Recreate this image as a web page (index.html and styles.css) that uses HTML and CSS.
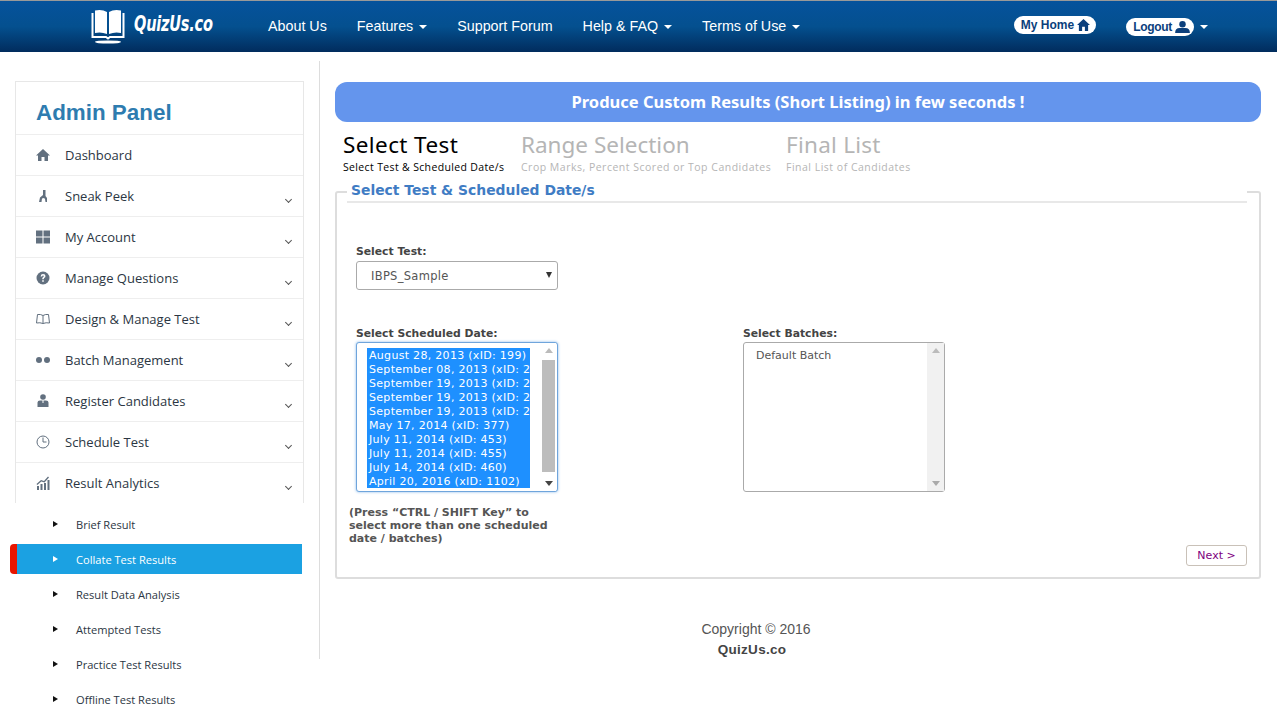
FILE: index.html
```html
<!DOCTYPE html>
<html lang="en">
<head>
    <meta charset="UTF-8">
    <meta name="viewport" content="width=device-width, initial-scale=1.0">
    <title>Collate Test Results</title>
    <link rel="stylesheet" href="styles.css">
</head>
<body>
    <header class="topbar">
        <a class="logo" href="#">
            <svg class="logo-icon" viewBox="0 0 34 35" fill="#fff">
                <path d="M4 1.500 Q11 0 16 3 V25 Q10 22.500 4 24 Z M30 1.500 Q23 0 18 3 V25 Q24 22.500 30 24 Z"/>
                <path d="M1.500 4 V28 H15 L17 29.500 L19 28 H32.500 V4" fill="none" stroke="#fff" stroke-width="2"/>
                <ellipse cx="17" cy="33" rx="13" ry="1.600"/>
            </svg>
            <span class="logo-text">QuizUs.co</span>
        </a>
        <nav class="nav">
            <a href="#">About Us</a>
            <a href="#">Features <i class="caret"></i></a>
            <a href="#">Support Forum</a>
            <a href="#">Help &amp; FAQ <i class="caret"></i></a>
            <a href="#">Terms of Use <i class="caret"></i></a>
        </nav>
        <div class="user-links">
            <a class="pill pill-home" href="#">My Home
                <svg viewBox="0 0 14 13" fill="#0b3f7c"><path d="M7 0 L14 6.500 L12 6.500 L12 13 L8.500 13 L8.500 8.500 L5.500 8.500 L5.500 13 L2 13 L2 6.500 L0 6.500 Z"/></svg>
            </a>
            <a class="pill pill-logout" href="#">Logout
                <svg viewBox="0 0 16 13" fill="#0b3f7c"><circle cx="8" cy="3.500" r="3.500"/><path d="M0 13 Q0 7.500 5 7.500 L11 7.500 Q16 7.500 16 13 Z"/></svg>
            </a>
            <i class="caret"></i>
        </div>
    </header>

    <div class="page">
        <aside class="sidebar">
            <div class="panel">
                <h1 class="panel-title">Admin Panel</h1>
                <a class="menu-row" href="#">
                    <svg class="menu-icon" viewBox="0 0 14 14"><path d="M7 1 L14 7.500 L12 7.500 L12 13 L8.500 13 L8.500 9 L5.500 9 L5.500 13 L2 13 L2 7.500 L0 7.500 Z"/></svg>
                    <span>Dashboard</span>
                </a>
                <a class="menu-row" href="#">
                    <svg class="menu-icon" viewBox="0 0 14 14"><path d="M7 1 L9.500 1 L9.500 7 L11 9 L11 13 L9.500 13 L9 10 L8 9 L6 9.500 L5.500 13 L3 13 L4 8.500 L7 6 Z"/></svg>
                    <span>Sneak Peek</span><i class="chev"></i>
                </a>
                <a class="menu-row" href="#">
                    <svg class="menu-icon" viewBox="0 0 14 14"><path d="M0 0.500 H6.500 V6.500 H0 Z M7.500 0.500 H14 V6.500 H7.500 Z M0 7.500 H6.500 V13.500 H0 Z M7.500 7.500 H14 V13.500 H7.500 Z"/></svg>
                    <span>My Account</span><i class="chev"></i>
                </a>
                <a class="menu-row" href="#">
                    <svg class="menu-icon" viewBox="0 0 14 14"><circle cx="7" cy="7" r="6.500"/><path d="M4.600 5.400 Q4.800 3 7 3 Q9.500 3 9.500 5 Q9.500 6.300 8.200 7 Q7.800 7.300 7.800 8.300 L6.200 8.300 Q6.100 6.700 7.200 6 Q7.900 5.600 7.800 5.100 Q7.700 4.500 7 4.500 Q6.300 4.500 6.200 5.400 Z M6.200 9.200 H7.800 V10.800 H6.200 Z" fill="#fff"/></svg>
                    <span>Manage Questions</span><i class="chev"></i>
                </a>
                <a class="menu-row" href="#">
                    <svg class="menu-icon icon-line" viewBox="0 0 14 14"><path d="M7 3.500 Q4.500 2 1.500 2.500 L0.500 11 Q4 10.300 7 11.500 Q10 10.300 13.500 11 L12.500 2.500 Q9.500 2 7 3.500 Z M7 3.500 V11.500"/></svg>
                    <span>Design &amp; Manage Test</span><i class="chev"></i>
                </a>
                <a class="menu-row" href="#">
                    <svg class="menu-icon" viewBox="0 0 14 14"><circle cx="3" cy="7" r="3"/><circle cx="11" cy="7" r="3"/></svg>
                    <span>Batch Management</span><i class="chev"></i>
                </a>
                <a class="menu-row" href="#">
                    <svg class="menu-icon" viewBox="0 0 14 14"><circle cx="7" cy="3" r="2.800"/><path d="M1.500 13 V8.500 Q1.500 6.500 4 6.500 L6.500 6.500 L6.500 9 L7.500 9 L7.500 6.500 L10 6.500 Q12.500 6.500 12.500 8.500 V13 Z"/></svg>
                    <span>Register Candidates</span><i class="chev"></i>
                </a>
                <a class="menu-row" href="#">
                    <svg class="menu-icon icon-line" viewBox="0 0 14 14"><circle cx="7" cy="7" r="6"/><path d="M7 2.500 V7 H10.500"/></svg>
                    <span>Schedule Test</span><i class="chev"></i>
                </a>
                <a class="menu-row" href="#">
                    <svg class="menu-icon" viewBox="0 0 14 14"><path d="M1 10 H3 V14 H1 Z M4.500 8 H6.500 V14 H4.500 Z M8 7 H10 V14 H8 Z M11.500 4 H13.500 V14 H11.500 Z M0.500 8 L5 4 L8 5 L12 0.500 L13 1.500 L8.500 6.500 L5.300 5.500 L1.300 9 Z"/></svg>
                    <span>Result Analytics</span><i class="chev"></i>
                </a>
            </div>
            <ul class="submenu">
                <li><a href="#">Brief Result</a></li>
                <li class="active"><a href="#">Collate Test Results</a></li>
                <li><a href="#">Result Data Analysis</a></li>
                <li><a href="#">Attempted Tests</a></li>
                <li><a href="#">Practice Test Results</a></li>
                <li><a href="#">Offline Test Results</a></li>
            </ul>
        </aside>

        <main class="content">
            <div class="banner">Produce Custom Results (Short Listing) in few seconds !</div>

            <div class="steps">
                <div class="step step-first current">
                    <div class="step-title">Select Test</div>
                    <div class="step-sub">Select Test &amp; Scheduled Date/s</div>
                </div>
                <div class="step step-second">
                    <div class="step-title">Range Selection</div>
                    <div class="step-sub">Crop Marks, Percent Scored or Top Candidates</div>
                </div>
                <div class="step">
                    <div class="step-title">Final List</div>
                    <div class="step-sub">Final List of Candidates</div>
                </div>
            </div>

            <fieldset class="box">
                <legend>Select Test &amp; Scheduled Date/s</legend>
                <div class="box-body">
                    <label class="field-label">Select Test:</label>
                    <div class="dropdown">IBPS_Sample<i class="dropdown-arrow"></i></div>

                    <div class="lists">
                        <div>
                            <label class="field-label">Select Scheduled Date:</label>
                            <div class="listbox focused">
                                <ul class="options selected">
                                    <li>August 28, 2013 (xID: 199)</li>
                                    <li>September 08, 2013 (xID: 2</li>
                                    <li>September 19, 2013 (xID: 2</li>
                                    <li>September 19, 2013 (xID: 2</li>
                                    <li>September 19, 2013 (xID: 2</li>
                                    <li>May 17, 2014 (xID: 377)</li>
                                    <li>July 11, 2014 (xID: 453)</li>
                                    <li>July 11, 2014 (xID: 455)</li>
                                    <li>July 14, 2014 (xID: 460)</li>
                                    <li>April 20, 2016 (xID: 1102)</li>
                                </ul>
                                <div class="scroll">
                                    <i class="scroll-up"></i>
                                    <div class="scroll-thumb"></div>
                                    <i class="scroll-down"></i>
                                </div>
                            </div>
                        </div>
                        <div>
                            <label class="field-label">Select Batches:</label>
                            <div class="listbox">
                                <ul class="options">
                                    <li>Default Batch</li>
                                </ul>
                                <div class="scroll">
                                    <i class="scroll-up"></i>
                                    <i class="scroll-down"></i>
                                </div>
                            </div>
                        </div>
                    </div>

                    <div class="box-foot">
                        <p class="note">(Press “CTRL / SHIFT Key” to select more than one scheduled date / batches)</p>
                        <button class="next-btn">Next &gt;</button>
                    </div>
                </div>
            </fieldset>

            <footer class="footer">
                <div>Copyright © 2016</div>
                <strong>QuizUs.co</strong>
            </footer>
        </main>
    </div>
</body>
</html>
```

FILE: styles.css
```css
html, body {
    height: 708px;
    overflow: hidden;
}

body {
    margin: 0;
    background-color: #fff;
    font-family: "Open Sans", sans-serif;
    color: #333;
}

a {
    color: inherit;
    text-decoration: none;
}

ul {
    list-style: none;
    margin: 0;
    padding: 0;
}

/* top bar */
.topbar {
    display: flex;
    align-items: center;
    box-sizing: border-box;
    height: 52px;
    padding: 0 69px 1px 91px;
    border-top: 1px solid #999;
    background: linear-gradient(#05529c 0%, #04508f 50%, #012c5d 100%);
    color: #fff;
    font-family: "Liberation Sans", sans-serif;
}

.logo {
    display: flex;
    align-items: center;
    width: 177px;
    flex: none;
}

.logo-icon {
    width: 34px;
    height: 35px;
}

.logo-text {
    margin: -4px 0 0 9px;
    font-family: "DejaVu Sans Condensed", "DejaVu Sans", sans-serif;
    font-size: 21px;
    font-weight: bold;
    font-style: italic;
    letter-spacing: -0.3px;
    transform: scaleX(0.77);
    transform-origin: left center;
}

.nav {
    display: flex;
    gap: 30px;
    font-size: 14.3px;
}

.caret {
    display: inline-block;
    margin-left: 2px;
    vertical-align: 2px;
    border-top: 4px solid #fff;
    border-left: 4px solid transparent;
    border-right: 4px solid transparent;
}

.user-links {
    display: flex;
    align-items: center;
    margin: 2px 0 0 auto;
    font-size: 12px;
    font-weight: bold;
}

.pill {
    display: flex;
    align-items: center;
    gap: 3px;
    height: 18px;
    padding: 0 6px 0 7px;
    border-radius: 9px;
    background-color: #fff;
    color: #0b3f7c;
}

.pill-home {
    margin: -4px 30px 0 0;
}

.pill-home svg {
    width: 13px;
    height: 12px;
}

.pill-logout {
    padding-right: 4px;
    letter-spacing: -0.3px;
}

.pill-logout svg {
    width: 15px;
    height: 12px;
}

.user-links .caret {
    margin-left: 6px;
    vertical-align: 0;
}

/* layout */
.page {
    display: flex;
    align-items: flex-start;
}

.sidebar {
    box-sizing: border-box;
    flex: none;
    width: 320px;
    height: 598px;
    margin-top: 9px;
    padding: 20px 15px 0 0;
    border-right: 1px solid #ddd;
}

.panel {
    margin-left: 15px;
    border: 1px solid #e7e7e7;
    border-bottom: 0;
}

.panel-title {
    margin: 0;
    height: 52px;
    padding-left: 20px;
    font-family: "Liberation Sans", sans-serif;
    font-size: 22.4px;
    line-height: 62px;
    color: #2e7cb0;
    box-sizing: border-box;
}

.menu-row {
    display: flex;
    align-items: center;
    position: relative;
    height: 40px;
    padding-left: 20px;
    border-top: 1px solid #eee;
    font-size: 13px;
    color: #2b3643;
}

.menu-icon {
    flex: none;
    width: 14px;
    height: 14px;
    margin-right: 15px;
    fill: #62707f;
}

.icon-line {
    fill: none;
    stroke: #62707f;
    stroke-width: 1;
}

.chev {
    position: absolute;
    right: 12px;
    top: 21px;
    width: 4px;
    height: 4px;
    border-right: 1px solid #555;
    border-bottom: 1px solid #555;
    transform: rotate(45deg);
}

.submenu {
    margin-left: 10px;
    padding-top: 1px;
}

.submenu li {
    box-sizing: border-box;
    height: 30px;
    margin-top: 5px;
    padding-left: 66px;
    position: relative;
    font-size: 11.1px;
    line-height: 31px;
    color: #2b3643;
}

.submenu li::before {
    content: "";
    position: absolute;
    left: 43px;
    top: 12px;
    border-left: 5px solid #111;
    border-top: 3px solid transparent;
    border-bottom: 3px solid transparent;
}

.submenu .active {
    width: 292px;
    border-left: 7px solid #e81600;
    border-radius: 4px 0 0 4px;
    padding-left: 59px;
    background-color: #1ba1e2;
    color: #fff;
}

.submenu .active::before {
    left: 36px;
    border-left-color: #fff;
}

/* main column */
.content {
    box-sizing: border-box;
    flex: 1;
    min-width: 0;
    padding: 30px 16px 0 15px;
}

.banner {
    height: 40px;
    border-radius: 12px;
    background-color: #6495ed;
    color: #fff;
    font-family: "Noto Sans", sans-serif;
    font-size: 16.5px;
    font-weight: bold;
    line-height: 40px;
    text-align: center;
}

.steps {
    display: flex;
    height: 48px;
    padding: 9px 0 0 8px;
    color: #b5b5b5;
}

.step-first {
    width: 178px;
}

.step-second {
    width: 265px;
}

.step-title {
    font-family: "Noto Sans", sans-serif;
    font-size: 22.5px;
    line-height: 28px;
    letter-spacing: 0.25px;
}

.step-first .step-title {
    letter-spacing: 0.4px;
}

.step-second .step-title {
    letter-spacing: 0;
}

.step-sub {
    font-size: 10.5px;
    line-height: 16px;
    letter-spacing: 0.5px;
}

.current {
    color: #000;
}

.current .step-sub {
    letter-spacing: 0.35px;
}

.box {
    box-sizing: border-box;
    height: 398px;
    margin: 2px 0 0;
    padding: 0;
    border: 2px solid #ddd;
    border-radius: 3px;
    font-family: "DejaVu Sans", sans-serif;
}

.box legend {
    box-sizing: border-box;
    width: 900px;
    height: 22px;
    margin-left: 10px;
    padding: 0 0 0 4px;
    border-bottom: 2px solid #e8e8e8;
    font-size: 13.9px;
    font-weight: bold;
    line-height: 18px;
    color: #3f7cc4;
}

.box-body {
    padding: 42px 12px 0 19px;
}

.field-label {
    display: block;
    font-size: 10.8px;
    font-weight: bold;
    line-height: 14px;
    color: #444;
}

.dropdown {
    box-sizing: border-box;
    position: relative;
    width: 202px;
    height: 29px;
    margin-top: 2px;
    padding-left: 14px;
    border: 1px solid #aaa;
    border-radius: 3px;
    font-size: 11.5px;
    letter-spacing: 0.3px;
    line-height: 29px;
    color: #555;
}

.dropdown-arrow {
    position: absolute;
    right: 5px;
    top: 10px;
    border-top: 6px solid #333;
    border-left: 3px solid transparent;
    border-right: 3px solid transparent;
}

.lists {
    display: grid;
    grid-template-columns: 387px 202px;
    margin-top: 37px;
}

.lists .field-label {
    margin-bottom: 1px;
}

.listbox {
    box-sizing: border-box;
    display: flex;
    justify-content: space-between;
    width: 202px;
    height: 150px;
    border: 1px solid #aaa;
    border-radius: 3px;
    background-color: #fff;
    font-size: 11px;
    color: #555;
}

.listbox .options {
    padding: 6px 0 0 12px;
    line-height: 14px;
}

.focused {
    border-color: #6fa5dc;
    box-shadow: 0 0 3px #8ab9ea;
}

.listbox .options.selected {
    box-sizing: border-box;
    width: 163px;
    height: 140px;
    padding: 1px 0 0;
    margin: 5px 0 0 10px;
    overflow: hidden;
    white-space: nowrap;
    letter-spacing: 0.3px;
    background-color: #1e90ff;
    color: #fff;
}

.options.selected li {
    padding-left: 2px;
}

.scroll {
    box-sizing: border-box;
    display: flex;
    flex-direction: column;
    align-items: center;
    flex: none;
    position: relative;
    width: 17px;
    height: 148px;
    background-color: #f1f1f1;
}

.focused .scroll {
    width: 15px;
    margin-right: 1px;
    background-color: #fff;
}

.scroll-up,
.scroll-down {
    position: absolute;
    border-left: 4px solid transparent;
    border-right: 4px solid transparent;
}

.scroll-up {
    top: 5px;
    border-bottom: 5px solid #bbb;
}

.scroll-down {
    bottom: 5px;
    border-top: 5px solid #aaa;
}

.focused .scroll-down {
    border-top-color: #444;
}

.scroll-thumb {
    width: 13px;
    height: 112px;
    margin-top: 17px;
    background-color: #bdbdbd;
}

.box-foot {
    display: flex;
    flex-direction: column;
    margin-left: -7px;
    margin-top: 14px;
}

.note {
    width: 205px;
    margin: 0;
    font-size: 11px;
    font-weight: bold;
    line-height: 13px;
    color: #555;
}

.next-btn {
    align-self: flex-end;
    width: 61px;
    height: 21px;
    padding: 0;
    border: 1px solid #c9c1b8;
    border-radius: 3px;
    background-color: #fff;
    font-family: "DejaVu Sans", sans-serif;
    font-size: 11px;
    color: #800080;
}

.footer {
    width: 842px;
    margin-top: 40px;
    font-family: "Liberation Sans", sans-serif;
    font-size: 14px;
    line-height: 20px;
    text-align: center;
    color: #555;
}

.footer strong {
    margin-right: 8px;
    font-size: 13.5px;
    letter-spacing: 0.3px;
    color: #444;
}
```
